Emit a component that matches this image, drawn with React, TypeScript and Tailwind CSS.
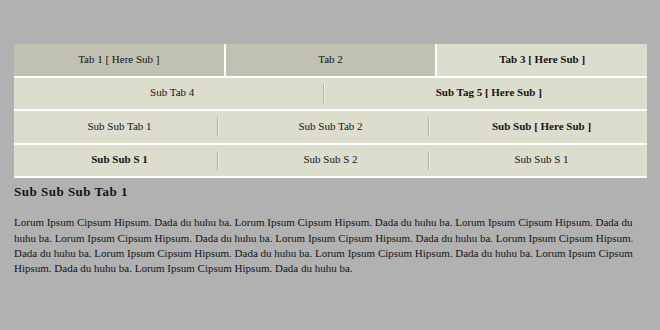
import React from "react"

type Item = { label: string; active?: boolean }

const rows: Item[][] = [
  [{ label: "Sub Tab 4" }, { label: "Sub Tag 5 [ Here Sub ]", active: true }],
  [{ label: "Sub Sub Tab 1" }, { label: "Sub Sub Tab 2" }, { label: "Sub Sub [ Here Sub ]", active: true }],
  [{ label: "Sub Sub S 1", active: true }, { label: "Sub Sub S 2" }, { label: "Sub Sub S 1" }],
]

const tabs: Item[] = [
  { label: "Tab 1 [ Here Sub ]" },
  { label: "Tab 2" },
  { label: "Tab 3 [ Here Sub ]", active: true },
]

const lorem =
  "Lorum Ipsum Cipsum Hipsum. Dada du huhu ba. Lorum Ipsum Cipsum Hipsum. Dada du huhu ba. Lorum Ipsum Cipsum Hipsum. Dada du huhu ba. Lorum Ipsum Cipsum Hipsum. Dada du huhu ba. Lorum Ipsum Cipsum Hipsum. Dada du huhu ba. Lorum Ipsum Cipsum Hipsum. Dada du huhu ba. Lorum Ipsum Cipsum Hipsum. Dada du huhu ba. Lorum Ipsum Cipsum Hipsum. Dada du huhu ba. Lorum Ipsum Cipsum Hipsum. Dada du huhu ba. Lorum Ipsum Cipsum Hipsum. Dada du huhu ba."

export default function App() {
  return (
    <div className="w-[660px] h-[330px] bg-[#b1b1b1] px-[14px] pt-[44px] text-[#141414] [font-family:'Liberation_Serif',serif] overflow-hidden">
      <div className="w-[633px]">
        {/* top tabs */}
        <div className="flex border-b-2 border-white">
          {tabs.map((t, i) => (
            <div
              key={i}
              className={`flex-1 h-[32px] flex items-center justify-center text-[11px] pb-[2px] ${
                i < 2 ? "border-r-2 border-white" : ""
              } ${t.active ? "bg-[#dcddcc] font-bold" : "bg-[#c0c1b0]"}`}
            >
              {t.label}
            </div>
          ))}
        </div>

        {/* sub rows */}
        {rows.map((row, r) => (
          <div key={r} className="flex bg-[#dcddcc] border-b-2 border-white">
            {row.map((it, i) => (
              <div
                key={i}
                className={`relative flex-1 h-[31.4px] flex items-center justify-center text-[11px] pb-[2px] ${
                  it.active ? "font-bold" : ""
                }`}
              >
                {i > 0 && (
                  <span className="absolute left-[-8px] top-[6px] h-[19px] w-[2px] border-l border-[#b4b5a4] border-r border-r-[#eeeee4]" />
                )}
                {it.label}
              </div>
            ))}
          </div>
        ))}

        <h3 className="mt-[5px] text-[13px] font-bold tracking-[0.5px] leading-[18px]">Sub Sub Sub Tab 1</h3>
        <p className="mt-[14px] text-[11px] leading-[15.4px]">{lorem}</p>
      </div>
    </div>
  )
}
